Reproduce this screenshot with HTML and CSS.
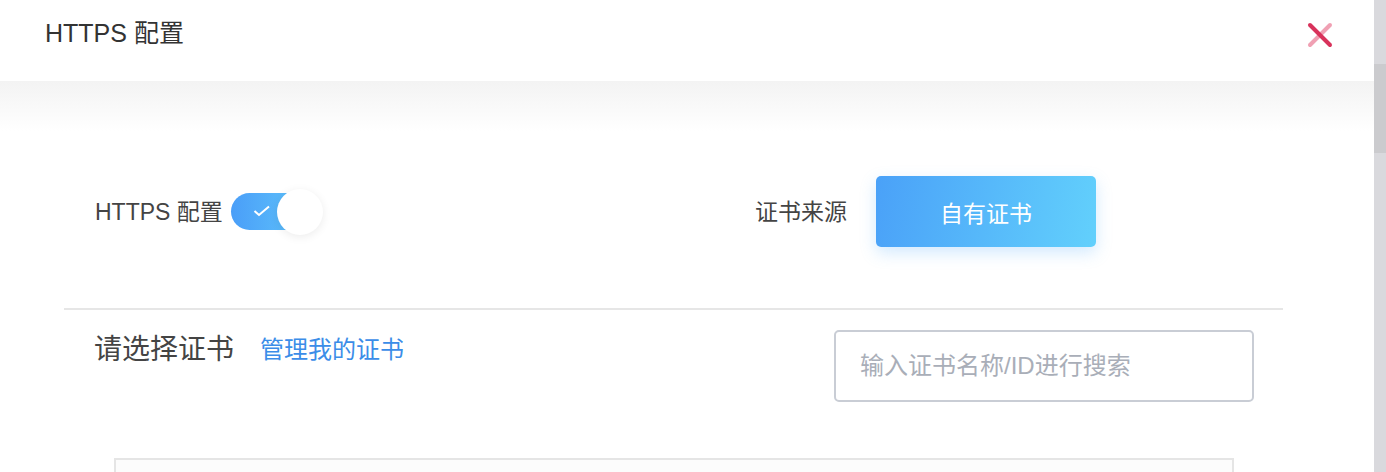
FILE: index.html
```html
<!DOCTYPE html>
<html>

<head>
	<meta http-equiv="Content-Type" content="text/html; charset=UTF-8">
	<title>HTTPS 配置</title>
	<link rel="stylesheet" href="styles.css">
</head>

<body>
	<div class="page">
		<div class="modal">
			<div class="modal-head">
				<h2 class="modal-title">HTTPS 配置</h2>
				<a class="modal-close" href="javascript:;">
					<svg width="26" height="26" viewBox="0 0 26 26">
						<line x1="23" y1="3" x2="3" y2="23" stroke="#f0a0b3" stroke-width="4" stroke-linecap="round" />
						<line x1="3" y1="3" x2="23" y2="23" stroke="#d8325b" stroke-width="4" stroke-linecap="round" />
					</svg>
				</a>
			</div>
			<div class="modal-shade"></div>

			<div class="modal-body">
				<div class="row-config">
					<div class="field">
						<span class="field-label">HTTPS 配置</span>
						<span class="switch">
							<span class="switch-track">
								<svg class="switch-check" width="18" height="12" viewBox="0 0 18 12">
									<polyline points="1.5,6 6,10 16,1.5" fill="none" stroke="#fff" stroke-width="2" />
								</svg>
							</span>
							<span class="switch-knob"></span>
						</span>
					</div>
					<div class="field">
						<span class="field-label">证书来源</span>
						<button class="btn-source">自有证书</button>
					</div>
				</div>

				<div class="divider"></div>

				<div class="row-cert">
					<span class="cert-title">请选择证书</span>
					<a class="cert-manage" href="javascript:;">管理我的证书</a>
					<input class="cert-search" type="text" placeholder="输入证书名称/ID进行搜索">
				</div>

				<div class="cert-list"></div>
			</div>
		</div>
		<div class="scrollbar">
			<div class="scrollbar-thumb"></div>
		</div>
	</div>
</body>

</html>
```

FILE: styles.css
```css
* {
	margin: 0;
	padding: 0;
	box-sizing: border-box;
}

body {
	background: #fff;
	font-family: "Liberation Sans", "Noto Sans CJK SC", sans-serif;
	color: #333;
	overflow: hidden;
}

.page {
	display: flex;
	height: 472px;
	overflow: hidden;
}

.modal {
	flex: 1;
	background: #fff;
}

.scrollbar {
	width: 12px;
	background: #d9d9dd;
	padding-top: 64px;
}

.scrollbar-thumb {
	height: 89px;
	background: #cbcbce;
}

/* 头部 */
.modal-head {
	height: 81px;
	display: flex;
	justify-content: space-between;
	align-items: flex-start;
	padding: 17px 41px 0 45px;
}

.modal-title {
	font-size: 25px;
	font-weight: normal;
	line-height: 32px;
	color: #333;
}

.modal-close {
	display: block;
	width: 26px;
	height: 26px;
	margin-top: 5px;
}

.modal-close svg {
	display: block;
}

.modal-shade {
	height: 50px;
	background: linear-gradient(#f3f3f3, #fff);
}

.modal-body {
	margin: 0 91px 0 64px;
}

/* 开关 + 证书来源 */
.row-config {
	display: grid;
	grid-template-columns: 660px auto;
	align-items: center;
	padding: 45px 0 0 31px;
	height: 116px;
}

.field {
	display: flex;
	align-items: center;
}

.field-label {
	font-size: 23px;
	color: #444;
	line-height: 30px;
}

.switch {
	position: relative;
	display: block;
	width: 92px;
	height: 46px;
	margin-left: 8px;
}

.switch-track {
	display: block;
	width: 76px;
	height: 37px;
	margin-top: 4px;
	border-radius: 19px;
	background: linear-gradient(90deg, #4a9ef8, #5fc4fb);
	padding: 12px 0 0 22px;
}

.switch-check {
	display: block;
}

.switch-knob {
	position: absolute;
	left: 46px;
	top: 0;
	width: 46px;
	height: 46px;
	border-radius: 50%;
	background: #fff;
	box-shadow: 0 2px 10px rgba(0, 0, 0, 0.08);
}

.btn-source {
	width: 220px;
	height: 71px;
	margin-left: 29px;
	border: none;
	border-radius: 5px;
	background: linear-gradient(100deg, #4aa1f8, #62d0fc);
	color: #fff;
	font-family: "Liberation Sans", "Noto Sans CJK SC", sans-serif;
	font-size: 23px;
	box-shadow: 0 6px 16px rgba(80, 170, 250, 0.25);
}

.divider {
	height: 2px;
	background: #e6e6e6;
	margin-top: 61px;
}

/* 选择证书 */
.row-cert {
	display: flex;
	align-items: flex-start;
	padding: 20px 29px 0 30px;
}

.cert-title {
	font-size: 28px;
	line-height: 40px;
	color: #444;
}

.cert-manage {
	font-size: 24px;
	line-height: 40px;
	color: #3b8de8;
	text-decoration: none;
	margin-left: 26px;
}

.cert-search {
	margin-left: auto;
	width: 420px;
	height: 72px;
	border: 2px solid #c9cdd5;
	border-radius: 5px;
	padding-left: 24px;
	font-family: "Liberation Sans", "Noto Sans CJK SC", sans-serif;
	font-size: 24px;
	outline: none;
}

.cert-search::placeholder {
	color: #a9aeb8;
}

.cert-list {
	margin: 56px 49px 0 50px;
	height: 14px;
	border: 2px solid #e5e5e5;
	border-bottom: none;
	background: #fcfcfc;
}
```
